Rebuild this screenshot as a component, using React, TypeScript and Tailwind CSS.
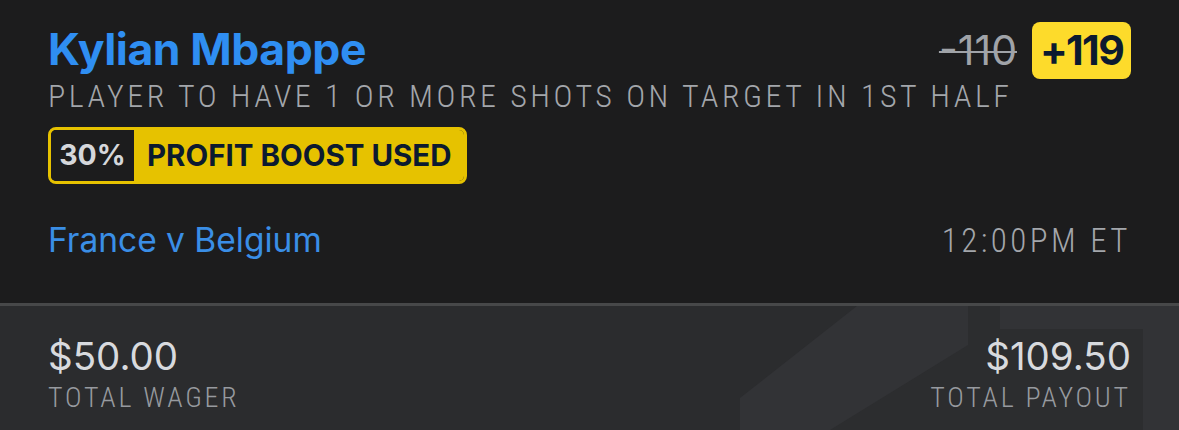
import React from "react";

const inter = "font-['Inter','Liberation_Sans',sans-serif]";
const cond =
  "font-['Liberation_Sans_Narrow','Noto_Sans_Condensed','Roboto_Condensed','DejaVu_Sans_Condensed','Roboto',sans-serif] [font-stretch:condensed] font-light";

function Watermark() {
  return (
    <svg
      className="absolute inset-0 h-full w-full"
      viewBox="0 0 1179 124"
      preserveAspectRatio="none"
      aria-hidden="true"
    >
      <polygon points="740,124 740,92 857,0 1179,0 1179,124" fill="#323336" />
      <polygon
        points="968,0 1000,0 1000,23 1143,23 1143,124 830,124 968,39"
        fill="#2c2d2f"
      />
    </svg>
  );
}

export default function App() {
  return (
    <div className="flex h-[430px] w-[1179px] flex-col overflow-hidden bg-[#1c1c1d]">
      {/* selection details */}
      <div className="h-[303px] px-[48px] pt-[27px]">
        <div className="flex items-start justify-between">
          <div className="min-w-0">
            <div
              className={`${inter} text-[44.5px] font-bold leading-[45px] tracking-[-0.01em] text-[#2f8ef2] whitespace-nowrap`}
            >
              Kylian Mbappe
            </div>
            <div
              className={`${cond} mt-[9px] text-[32px] leading-[30px] tracking-[0.11em] text-[#a3a6ab] whitespace-nowrap`}
            >
              PLAYER TO HAVE 1 OR MORE SHOTS ON TARGET IN 1ST HALF
            </div>
          </div>
          <div className="-mt-[5px] flex items-center gap-[15px]">
            <span
              className={`${inter} text-[41px] leading-[41px] text-[#a0a3a8] line-through decoration-[2px]`}
            >
              -110
            </span>
            <span
              className={`${inter} flex h-[57px] w-[99px] items-center justify-center rounded-[8px] bg-[#fddb2b] text-[41px] font-bold leading-none tracking-[-0.04em] text-[#0c1a2f]`}
            >
              +119
            </span>
          </div>
        </div>

        <div className="mt-[16px] flex h-[57px] w-[419px] overflow-hidden rounded-[8px] border-[3px] border-[#e6c200]">
          <div
            className={`${inter} flex w-[83px] items-center justify-center bg-[#1c1c1d] text-[28.5px] font-bold text-[#d5d7db]`}
          >
            30%
          </div>
          <div
            className={`${inter} flex flex-1 items-center bg-[#e6c200] pl-[13px] text-[29.5px] font-bold text-[#0c1a2f] whitespace-nowrap`}
          >
            PROFIT BOOST USED
          </div>
        </div>

        <div className="mt-[40px] flex items-baseline justify-between">
          <span className={`${inter} text-[33.5px] leading-[33px] text-[#3a8ee6]`}>
            France v Belgium
          </span>
          <span
            className={`${cond} text-[33px] leading-[33px] tracking-[0.105em] text-[#a3a6ab]`}
          >
            12:00PM ET
          </span>
        </div>
      </div>

      <div className="h-[3px] bg-[#474849]" />

      {/* wager totals */}
      <div className="relative flex-1 bg-[#2b2c2e]">
        <Watermark />
        <div className="relative flex justify-between px-[48px] pt-[32px]">
          <div className="flex flex-col items-start">
            <span className={`${inter} text-[38.5px] leading-[37px] text-[#d8dade]`}>$50.00</span>
            <span
              className={`${cond} mt-[9px] text-[28px] leading-[28px] tracking-[0.1em] text-[#979a9f]`}
            >
              TOTAL WAGER
            </span>
          </div>
          <div className="flex flex-col items-end">
            <span className={`${inter} text-[38.5px] leading-[37px] text-[#d8dade]`}>$109.50</span>
            <span
              className={`${cond} mt-[9px] text-[28px] leading-[28px] tracking-[0.1em] text-[#979a9f]`}
            >
              TOTAL PAYOUT
            </span>
          </div>
        </div>
      </div>
    </div>
  );
}
